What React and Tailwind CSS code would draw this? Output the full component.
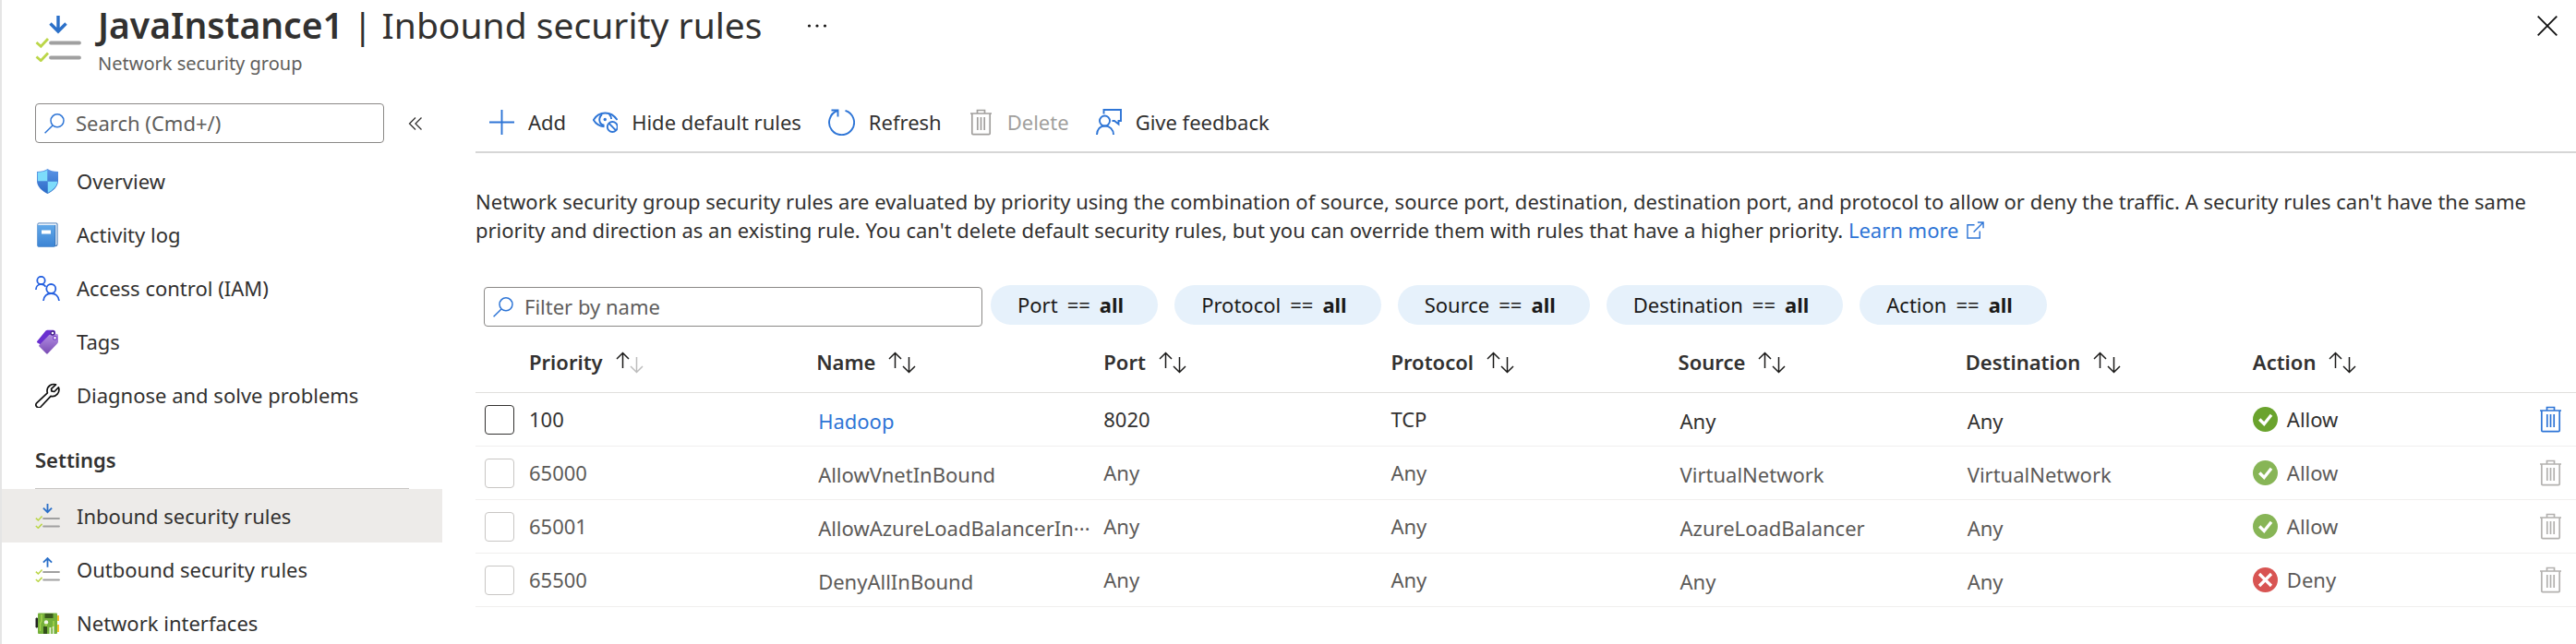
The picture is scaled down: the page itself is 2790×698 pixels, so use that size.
const BLUE = "#2e75d6";

function RulesIcon({ up = false, className }) {
  return (
    <svg viewBox="0 0 50 50" fill="none" className={className} aria-hidden="true">
      {up ? (
        <path d="M25 20V2M16.5 10.500L25 2l8.500 8.500" stroke="#2b70c9" strokeWidth="3.400" />
      ) : (
        <path d="M25 0v17M16.500 8.500L25 17l8.500-8.500" stroke="#2b70c9" strokeWidth="3.400" />
      )}
      <path d="M17 29.500h31M17 45.500h31" stroke="#a0a0a0" strokeWidth="3.800" strokeLinecap="round" />
      <path d="M1.500 29l4.800 4.200L14 25M1.500 44.500l4.800 4.200L14 40.500" stroke="#bbd648" strokeWidth="2.800" />
    </svg>
  );
}

function ShieldIcon() {
  return (
    <svg viewBox="0 0 27 27" className="size-[27px]" aria-hidden="true">
      <defs>
        <linearGradient id="shield" x1="0" y1="0" x2="0" y2="1">
          <stop offset="0" stopColor="#5c94e6" />
          <stop offset="1" stopColor="#2a6ac6" />
        </linearGradient>
        <clipPath id="shieldClip">
          <path d="M13.500 1C11 3 7 3.600 2.800 3.800V13c0 6.500 6 10.500 10.700 13.200C18.200 23.500 24.200 19.500 24.200 13V3.800C20 3.600 16 3 13.500 1z" />
        </clipPath>
      </defs>
      <path d="M13.500 0C11 2.200 7 2.700 2 3v10c0 7.200 6.500 11.200 11.500 14C18.500 24.200 25 20.200 25 13V3C20 2.700 16 2.200 13.500 0z" fill="url(#shield)" />
      <g clipPath="url(#shieldClip)">
        <path d="M2 0h11.500v13.500H2zM13.500 13.500H25V27H13.500z" fill="#7ddcfb" />
        <path d="M13.500 0H25v13.500H13.500zM2 13.500h11.500V27H2z" fill="url(#shield)" />
      </g>
    </svg>
  );
}

function BookIcon() {
  return (
    <svg viewBox="0 0 27 27" className="size-[27px]" aria-hidden="true">
      <defs>
        <linearGradient id="book" x1="0" y1="0" x2="0" y2="1">
          <stop offset="0" stopColor="#62a8e8" />
          <stop offset="1" stopColor="#3c84d4" />
        </linearGradient>
      </defs>
      <path d="M4 .5h19a1.500 1.500 0 0 1 1.500 1.500v22a2 2 0 0 1-2 2L20 26.500H4A1.500 1.500 0 0 1 2.500 25V2A1.500 1.500 0 0 1 4 .5z" fill="#2a62a8" />
      <path d="M3.500 1.300h19.200a1 1 0 0 1 1 1V24l-1.500 1.500V3H3z" fill="#e8f1fa" />
      <path d="M2.500 3h19v22.500a1 1 0 0 1-1 1H4A1.500 1.500 0 0 1 2.500 25z" fill="url(#book)" />
      <rect x="7" y="8.500" width="10" height="4" fill="#fff" />
    </svg>
  );
}

function PeopleIcon() {
  return (
    <svg viewBox="0 0 27 27" fill="none" stroke="#2560e0" strokeWidth="1.800" className="size-[27px]" aria-hidden="true">
      <circle cx="6.500" cy="5" r="4.200" />
      <path d="M.9 15c0-3.500 2.400-5.800 5.600-5.800 2.200 0 4 1 5 2.600" />
      <circle cx="17.300" cy="14" r="5" />
      <path d="M9 27c.3-4.800 3.800-8 8.400-8s8.100 3.200 8.600 8" />
    </svg>
  );
}

function TagIcon() {
  return (
    <svg viewBox="0 0 27 27" className="size-[27px]" aria-hidden="true">
      <defs>
        <linearGradient id="tag" x1="0" y1="0" x2="0" y2="1">
          <stop offset="0" stopColor="#b490e4" />
          <stop offset="1" stopColor="#7a4cb4" />
        </linearGradient>
      </defs>
      <path d="M13 .8h6.500c1.600 0 2.500 1 2.500 2.600V8L7 17l-4.500-2.600a1 1 0 0 1-.2-1.600L11.500 1.600z" fill="#6a2fd0" />
      <path d="M16.500 5.500L23 4.800c1.300 0 2 .8 2 2v6.500c0 .8-.3 1.500-.8 2L13.700 26.200a1 1 0 0 1-1.500 0L4.500 18.500a1 1 0 0 1 0-1.500L15 6.200z" fill="url(#tag)" />
      <circle cx="19" cy="4" r="2" fill="#fff" stroke="#43208a" strokeWidth="1.300" />
      <circle cx="21.500" cy="9.300" r="1.900" fill="#fff" stroke="#7a44c8" strokeWidth="1.200" />
    </svg>
  );
}

function WrenchIcon() {
  return (
    <svg viewBox="0 0 27 27" fill="none" stroke="#111" strokeWidth="1.700" strokeLinejoin="round" className="size-[27px]" aria-hidden="true">
      <path d="M22.500 1.900A7.200 7.200 0 0 0 13 8.500c0 .9.100 1.600.4 2.300L1.900 21.700a3 3 0 0 0 4.200 4.300L17 14.400a7.200 7.200 0 0 0 8.400-9.600l-4.600 4.700-3-.6-.2-2.500z" />
    </svg>
  );
}

function NicIcon() {
  return (
    <svg viewBox="0 0 27 27" className="size-[27px]" aria-hidden="true">
      <path d="M2.500 8v10H1V8z" fill="#222" stroke="#222" />
      <path d="M22 5h4v6h-4zM22 15h4v8h-4z" fill="#f9c22e" />
      <rect x="3" y="2.500" width="21" height="22.500" rx="1" fill="#74b03a" />
      <path d="M10.500 3h9v5h-9z" fill="#3b5a1c" />
      <path d="M7 4v7l-1.500 3v8M20 11v6l-2 2" stroke="#a6d34c" strokeWidth="1.500" fill="none" />
      <circle cx="12" cy="12.500" r="2.200" fill="#f4f8ea" />
      <path d="M12 14v3" stroke="#a6d34c" strokeWidth="1.500" />
      <path d="M9 17h4v8H9z" fill="#33501a" />
      <path d="M15.500 18h1.800v7h-1.800zM19 17h1.500v8H19z" fill="#e9f3dc" />
    </svg>
  );
}

function SearchIcon() {
  return (
    <svg viewBox="0 0 22 22" fill="none" stroke={BLUE} strokeWidth="1.500" className="size-[22px] shrink-0" aria-hidden="true">
      <circle cx="14" cy="7.800" r="7" />
      <path d="M9 13L.6 21.300" />
    </svg>
  );
}

function TrashIcon() {
  return (
    <svg viewBox="0 0 27 29" fill="none" stroke="currentColor" strokeWidth="1.700" className="h-[29px] w-[27px] shrink-0" aria-hidden="true">
      <path d="M2 5h23M9.500 5V1.500h8V5M3.800 5v21.500c0 .7.400 1.100 1.100 1.100h17.200c.7 0 1.100-.4 1.100-1.100V5" />
      <path d="M9.800 9v14M13.500 9v14M17.200 9v14" />
    </svg>
  );
}

function AddIcon() {
  return (
    <svg viewBox="0 0 27 27" stroke={BLUE} strokeWidth="1.900" className="size-[27px]" aria-hidden="true">
      <path d="M13.500 0v27M0 13.500h27" />
    </svg>
  );
}

function HideIcon() {
  return (
    <svg viewBox="0 0 27 27" fill="none" stroke={BLUE} strokeWidth="1.900" className="size-[27px]" aria-hidden="true">
      <path d="M26.500 11C23.500 6.500 19 3.500 13.500 3.500S3.500 6.500.8 11c2.600 4.400 6.800 6.800 11.700 7.300" />
      <path d="M10 5c-2.800 2.800-3.300 6-2.200 8.600.8 1.900 2.500 3 4.700 3.200M17.800 4.800c1.600 1.600 2.300 3.300 2.300 5.200" />
      <circle cx="13.300" cy="10.500" r="1.700" fill={BLUE} stroke="none" />
      <circle cx="21.300" cy="18.500" r="5.500" />
      <path d="M17.500 14.700l7.600 7.600" />
    </svg>
  );
}

function RefreshIcon() {
  return (
    <svg viewBox="0 0 29 29" fill="none" stroke={BLUE} strokeWidth="1.900" className="size-[29px]" aria-hidden="true">
      <path d="M18.500 1.800A13.500 13.500 0 1 1 10 2" />
      <path d="M3.500 1.500h7v7" />
    </svg>
  );
}

function FeedbackIcon() {
  return (
    <svg viewBox="0 0 28 28" fill="none" stroke={BLUE} strokeWidth="1.900" className="size-[28px]" aria-hidden="true">
      <path d="M8.500 5.500V1h18.500v12h-2.500v3.500L20 13h-2.500" />
      <circle cx="9.500" cy="13" r="5.500" />
      <path d="M1 28c0-5.500 3.500-9.500 8.700-9.500S19 22.500 19 28" />
    </svg>
  );
}

function SortIcon({ asc }) {
  return (
    <svg viewBox="0 0 30 24" fill="none" strokeWidth="1.500" className="h-6 w-[30px]" aria-hidden="true">
      <path d="M7.500 18V1.500M1 8l6.500-6.500L14 8" stroke="#1b1a19" />
      <path d="M22.500 6v16.500M16 16l6.500 6.500L29 16" stroke={asc ? "#bdbdbd" : "#1b1a19"} />
    </svg>
  );
}

function StatusIcon({ allow }) {
  return (
    <svg viewBox="0 0 27 27" className="size-[27px]" aria-hidden="true">
      <circle cx="13.500" cy="13.500" r="13.500" fill={allow ? "#6aa32d" : "#cf2a27"} />
      {allow ? (
        <path d="M7.200 13.500l5 5L20 8.800" fill="none" stroke="#fff" strokeWidth="3.300" />
      ) : (
        <path d="M7 7l13 13M20 7L7 20" fill="none" stroke="#fff" strokeWidth="3.200" />
      )}
    </svg>
  );
}

const small = "size-[27px]";

function NavItem({ icon, label, active }) {
  return (
    <li>
      <a
        href="#"
        aria-current={active ? "page" : undefined}
        className={`flex h-[58px] items-center gap-[18px] pl-9 ${active ? "bg-[#edebe9]" : ""}`}
      >
        {icon}
        {label}
      </a>
    </li>
  );
}

function SearchBox({ id, label, className }) {
  return (
    <div className={`flex h-[43px] items-center gap-3 rounded-[4px] border border-[#8a8886] pl-[9px] ${className}`}>
      <label htmlFor={id} aria-label={label}>
        <SearchIcon />
      </label>
      <input
        id={id}
        type="text"
        placeholder={label}
        className="w-full min-w-0 bg-transparent outline-none placeholder:text-[#605e5c]"
      />
    </div>
  );
}

function Sidebar() {
  return (
    <nav className="w-[477px] shrink-0" aria-label="Resource menu">
      <div className="mb-3 flex items-center pl-9">
        <SearchBox id="menu-search" label="Search (Cmd+/)" className="w-[378px]" />
        <button type="button" aria-label="Collapse menu" className="ml-[26px]">
          <svg viewBox="0 0 16 14" fill="none" stroke="#323130" strokeWidth="1.300" className="h-[14px] w-4" aria-hidden="true">
            <path d="M8 .5L1.500 7 8 13.500M14.500 .5L8 7l6.500 6.500" />
          </svg>
        </button>
      </div>
      <ul>
        <NavItem icon={<ShieldIcon />} label="Overview" />
        <NavItem icon={<BookIcon />} label="Activity log" />
        <NavItem icon={<PeopleIcon />} label="Access control (IAM)" />
        <NavItem icon={<TagIcon />} label="Tags" />
        <NavItem icon={<WrenchIcon />} label="Diagnose and solve problems" />
      </ul>
      <h2 className="mr-9 ml-9 border-b border-[#c8c6c4] pt-3 pb-0.5 leading-[58px] font-semibold">Settings</h2>
      <ul>
        <NavItem icon={<RulesIcon className={small} />} label="Inbound security rules" active />
        <NavItem icon={<RulesIcon up className={small} />} label="Outbound security rules" />
        <NavItem icon={<NicIcon />} label="Network interfaces" />
      </ul>
    </nav>
  );
}

function Command({ icon, label, disabled }) {
  return (
    <button type="button" disabled={disabled} className="flex items-center gap-[15px] disabled:text-[#a19f9d]">
      {icon}
      {label}
    </button>
  );
}

const filters = ["Port", "Protocol", "Source", "Destination", "Action"];
const columns = ["Priority", "Name", "Port", "Protocol", "Source", "Destination", "Action"];
const rules = [
  { priority: "100", name: "Hadoop", port: "8020", protocol: "TCP", source: "Any", destination: "Any", action: "Allow", custom: true },
  { priority: "65000", name: "AllowVnetInBound", port: "Any", protocol: "Any", source: "VirtualNetwork", destination: "VirtualNetwork", action: "Allow" },
  { priority: "65001", name: "AllowAzureLoadBalancerIn···", port: "Any", protocol: "Any", source: "AzureLoadBalancer", destination: "Any", action: "Allow" },
  { priority: "65500", name: "DenyAllInBound", port: "Any", protocol: "Any", source: "Any", destination: "Any", action: "Deny" },
];

function RuleRow({ rule }) {
  const cell = "border-b border-[#f0efee] p-0";
  const detail = "border-b border-[#f0efee] pt-1 pr-0 pb-0 pl-0.5 whitespace-nowrap";
  return (
    <tr className={`h-[58px] ${rule.custom ? "" : "text-[#5c5a58]"}`}>
      <td className={cell}>
        <input
          type="checkbox"
          disabled={!rule.custom}
          aria-label={`Select rule ${rule.priority}`}
          className="ml-[10px] block size-8 appearance-none rounded-[4px] border border-[#323130] disabled:border-[#c8c6c4]"
        />
      </td>
      <td className={cell}>{rule.priority}</td>
      <td className={detail}>
        {rule.custom ? <a href="#" className="text-[#2e75d6]">{rule.name}</a> : rule.name}
      </td>
      <td className={cell}>{rule.port}</td>
      <td className={cell}>{rule.protocol}</td>
      <td className={detail}>{rule.source}</td>
      <td className={detail}>{rule.destination}</td>
      <td className={cell}>
        <span className="flex items-center gap-[10px]">
          <span className={rule.custom ? "" : "opacity-80"}>
            <StatusIcon allow={rule.action === "Allow"} />
          </span>
          {rule.action}
        </span>
      </td>
      <td className={cell}>
        <button
          type="button"
          disabled={!rule.custom}
          aria-label={`Delete rule ${rule.priority}`}
          className="-ml-0.5 block text-[#2e75d6] disabled:text-[#b3b1af]"
        >
          <TrashIcon />
        </button>
      </td>
    </tr>
  );
}

export default function App() {
  return (
    <div className="h-screen overflow-hidden border-l-2 border-[#e5e5e5] bg-white font-['Noto_Sans','Open_Sans',sans-serif] text-[22px] leading-[31px] text-[#323130]">
      <header className="flex items-start pr-5 pb-7 pl-9">
        <RulesIcon className="mt-[17px] size-[50px]" />
        <div className="ml-[18px]">
          <h1 className="text-[39px] leading-[54px]">
            <span className="font-semibold">JavaInstance1</span> | Inbound security rules
          </h1>
          <p className="text-[20px] leading-[30px] text-[#605e5c]">Network security group</p>
        </div>
        <button type="button" aria-label="More" className="mt-[17px] ml-12">
          <svg viewBox="0 0 22 22" fill="#1b1a19" className="size-[22px]" aria-hidden="true">
            <circle cx="2.500" cy="11" r="1.600" />
            <circle cx="11" cy="11" r="1.600" />
            <circle cx="19.500" cy="11" r="1.600" />
          </svg>
        </button>
        <button type="button" aria-label="Close" className="mt-[17px] ml-auto">
          <svg viewBox="0 0 22 22" stroke="#111" strokeWidth="1.800" className="size-[22px]" aria-hidden="true">
            <path d="M.7 .7l20.600 20.600M21.300 .7L.7 21.300" />
          </svg>
        </button>
      </header>

      <div className="flex items-start">
        <Sidebar />
        <main className="min-w-0 flex-1 pl-9">
          <div className="flex h-[54px] gap-[29px] border-b-2 border-[#d6d6d6] pb-3 pl-[15px]">
            <Command icon={<AddIcon />} label="Add" />
            <Command icon={<HideIcon />} label="Hide default rules" />
            <Command icon={<RefreshIcon />} label="Refresh" />
            <Command icon={<TrashIcon />} label="Delete" disabled />
            <Command icon={<FeedbackIcon />} label="Give feedback" />
          </div>

          <p className="mt-[37px]">
            Network security group security rules are evaluated by priority using the combination of source, source port,
            destination, destination port, and protocol to allow or deny the traffic. A security rules can't have the same
            priority and direction as an existing rule. You can't delete default security rules, but you can override them
            with rules that have a higher priority.{" "}
            <a href="#" className="text-[#2e75d6]">
              Learn more
              <svg viewBox="0 0 20 20" fill="none" stroke={BLUE} strokeWidth="1.500" className="ml-2 inline size-[19px] align-[-1px]" aria-hidden="true">
                <path d="M9 4H1v15h14v-8M12.500 1H19v6.500M19 1L8 12" />
              </svg>
            </a>
          </p>

          <div className="mt-11 flex items-start gap-[18px] pl-[9px]">
            <SearchBox id="rule-filter" label="Filter by name" className="mt-0.5 -mr-[9px] w-[540px]" />
            {filters.map((name) => (
              <button key={name} type="button" className="flex h-[43px] items-center gap-[10px] rounded-full bg-[#e6f1fb] pr-[37px] pl-[29px] text-[#1b1a19]">
                <span>{name}</span>
                <span>==</span>
                <span className="font-bold">all</span>
              </button>
            ))}
          </div>

          <table className="mt-1.5 w-full table-fixed border-separate border-spacing-0 text-left">
            <thead>
              <tr className="h-[66px]">
                <th className="w-[58px] border-b border-[#e1dfdd] p-0" aria-label="Select" />
                {columns.map((name) => (
                  <th key={name} className="border-b border-[#e1dfdd] p-0 font-semibold">
                    <button type="button" className="flex items-center gap-[14px]">
                      {name}
                      <SortIcon asc={name === "Priority"} />
                    </button>
                  </th>
                ))}
                <th className="w-[39px] border-b border-[#e1dfdd] p-0" aria-label="Delete" />
              </tr>
            </thead>
            <tbody>
              {rules.map((rule) => (
                <RuleRow key={rule.priority} rule={rule} />
              ))}
            </tbody>
          </table>
        </main>
      </div>
    </div>
  );
}
